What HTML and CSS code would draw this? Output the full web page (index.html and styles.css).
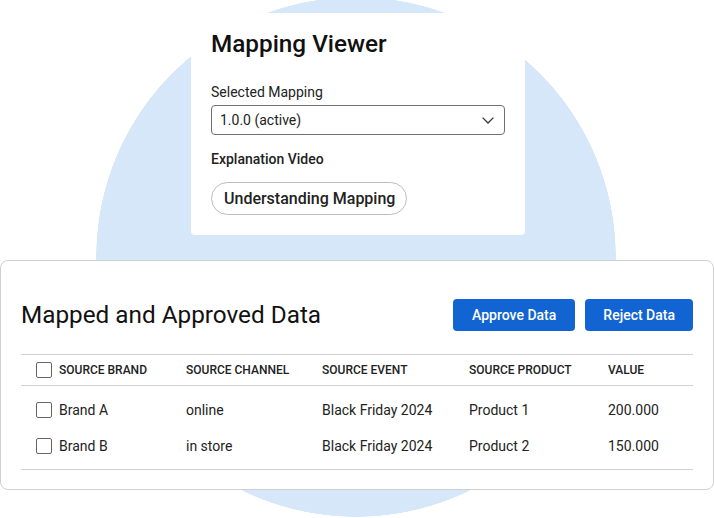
FILE: index.html
```html
<!DOCTYPE html>
<html lang="en">
<head>
    <meta charset="UTF-8">
    <meta name="viewport" content="width=device-width, initial-scale=1.0">
    <title>Mapping Viewer</title>
    <link rel="stylesheet" href="styles.css">
</head>
<body>
    <div class="viewer-card">
        <h1>Mapping Viewer</h1>
        <label class="field-label" for="mapping">Selected Mapping</label>
        <div class="select-box" id="mapping">
            <span>1.0.0 (active)</span>
            <svg class="chevron" width="12" height="7" viewBox="0 0 12 7">
                <path d="M0.6 0.6 L6 6 L11.4 0.6" fill="none" stroke="#333" stroke-width="1.3"/>
            </svg>
        </div>
        <div class="field-label video-label">Explanation Video</div>
        <button class="pill-button">Understanding Mapping</button>
    </div>

    <div class="data-card">
        <div class="data-header">
            <h2>Mapped and Approved Data</h2>
            <div class="actions">
                <button class="primary-button approve">Approve Data</button>
                <button class="primary-button">Reject Data</button>
            </div>
        </div>

        <div class="data-table">
            <div class="table-row head">
                <div class="cell first"><span class="checkbox"></span>Source Brand</div>
                <div class="cell">Source Channel</div>
                <div class="cell">Source Event</div>
                <div class="cell">Source Product</div>
                <div class="cell">Value</div>
            </div>
            <div class="table-body">
                <div class="table-row">
                    <div class="cell first"><span class="checkbox"></span>Brand A</div>
                    <div class="cell">online</div>
                    <div class="cell">Black Friday 2024</div>
                    <div class="cell">Product 1</div>
                    <div class="cell">200.000</div>
                </div>
                <div class="table-row">
                    <div class="cell first"><span class="checkbox"></span>Brand B</div>
                    <div class="cell">in store</div>
                    <div class="cell">Black Friday 2024</div>
                    <div class="cell">Product 2</div>
                    <div class="cell">150.000</div>
                </div>
            </div>
        </div>
    </div>
</body>
</html>
```

FILE: styles.css
```css
body {
    font-family: Roboto, 'Liberation Sans', sans-serif;
    margin: 0;
    width: 714px;
    height: 518px;
    overflow: hidden;
    background: radial-gradient(circle 260px at 356px 257px, #d5e7f8 259.5px, rgba(213, 231, 248, 0) 260px) no-repeat, white;
    color: #222;
}
.viewer-card {
    width: 294px;
    margin: 13px 0 0 191px;
    padding: 17px 20px 20px;
    background-color: white;
    border-radius: 4px;
}
h1 {
    margin: 0 0 24px;
    font-size: 24.3px;
    line-height: 28px;
    font-weight: 500;
    color: #111;
}
.field-label {
    display: block;
    font-size: 14px;
    line-height: 20px;
    font-weight: 400;
    margin-bottom: 3px;
    color: #222;
}
.video-label {
    margin-top: 14px;
    margin-bottom: 13px;
    font-weight: 500;
}
.select-box {
    display: flex;
    justify-content: space-between;
    align-items: center;
    height: 28px;
    padding: 0 10px 0 8px;
    border: 1px solid #707070;
    border-radius: 4px;
    font-size: 14px;
}
.chevron {
    display: block;
}
.pill-button {
    height: 33px;
    padding: 0 11px 0 12px;
    border: 1px solid #bdbdbd;
    border-radius: 17px;
    background-color: white;
    font-family: inherit;
    font-size: 16px;
    font-weight: 500;
    color: #222;
}
.data-card {
    margin-top: 25px;
    height: 190px;
    padding: 38px 20px 0;
    border: 1px solid #d0d0d0;
    border-radius: 8px;
    background-color: white;
}
.data-header {
    display: flex;
    justify-content: space-between;
    align-items: center;
    height: 32px;
}
h2 {
    margin: 0;
    font-size: 24.3px;
    line-height: 28px;
    font-weight: 400;
    color: #111;
}
.actions {
    display: flex;
    gap: 10px;
}
.primary-button {
    height: 32px;
    padding: 0 18px;
    border: none;
    border-radius: 4px;
    background-color: #1264d2;
    color: white;
    font-family: inherit;
    font-size: 14px;
    font-weight: 500;
}
.primary-button.approve {
    padding: 0 19px;
}
.data-table {
    margin-top: 23px;
    border-top: 1px solid #d0d0d0;
    border-bottom: 1px solid #d0d0d0;
}
.table-row {
    display: grid;
    grid-template-columns: 165px 136px 147px 139px 1fr;
    align-items: center;
    height: 36px;
    font-size: 14px;
}
.table-row.head {
    height: 30px;
    border-bottom: 1px solid #d0d0d0;
    font-size: 12px;
    font-weight: 500;
    text-transform: uppercase;
}
.table-body {
    padding: 6px 0 5px;
}
.cell.first {
    display: flex;
    align-items: center;
    padding-left: 15px;
}
.checkbox {
    width: 14px;
    height: 14px;
    margin-right: 7px;
    border: 1px solid #666;
    border-radius: 2px;
}
```
